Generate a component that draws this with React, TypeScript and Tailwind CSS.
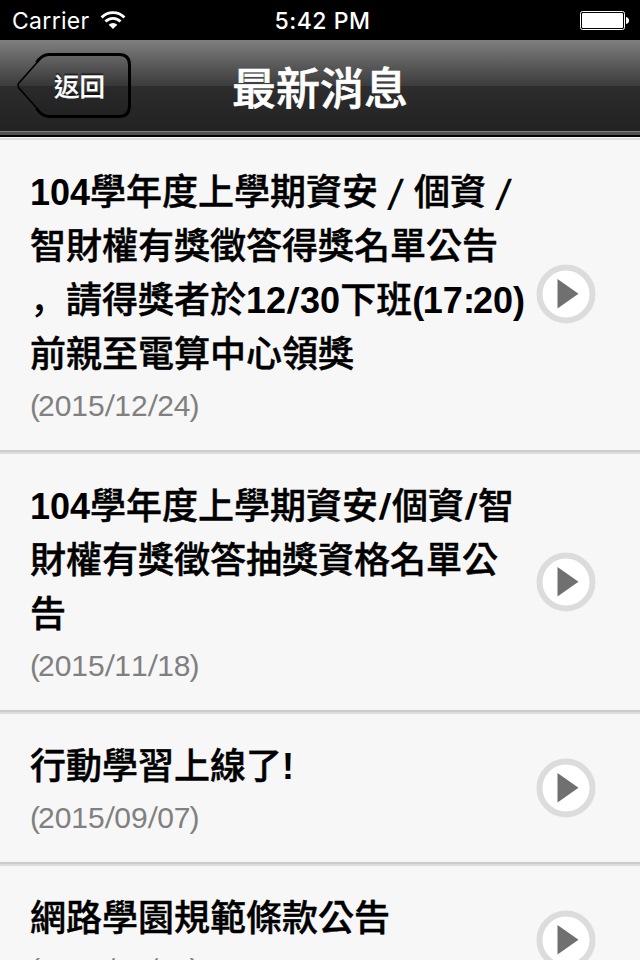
import clsx from "clsx";

interface NewsItem {
  lines: string[];
  date: string;
}

const NEWS: NewsItem[] = [
  {
    lines: ["104學年度上學期資安 / 個資 /", "智財權有獎徵答得獎名單公告", "，請得獎者於12/30下班(17:20)", "前親至電算中心領獎"],
    date: "2015/12/24",
  },
  {
    lines: ["104學年度上學期資安/個資/智", "財權有獎徵答抽獎資格名單公", "告"],
    date: "2015/11/18",
  },
  { lines: ["行動學習上線了!"], date: "2015/09/07" },
  { lines: ["網路學園規範條款公告"], date: "2013/05/07" },
];

const CJK = "font-['Noto_Sans_CJK_TC',sans-serif] font-medium";
const LATIN = "font-['Liberation_Sans',sans-serif] font-bold";

// Splits a title into runs and gives each its own face; punctuation is spaced like Helvetica Neue
function MixedText({ text }: { text: string }) {
  const runs = text.match(/ \/ ?|\d+|[/():!]|，|[^\x20-\x7e，]+/g) ?? [];
  return (
    <>
      {runs.map((run, i) => {
        let cls = clsx(CJK, "[-webkit-text-stroke:0.45px_#000]");
        if (run.startsWith(" /")) {
          return (
            <span key={i} className={clsx(CJK, "inline-block w-9 text-center text-[31px] [-webkit-text-stroke:1px_#000]")}>
              <span className="inline-block -translate-y-px -skew-x-[8deg]">/</span>
            </span>
          );
        }
        if (run === "，") cls = "font-['Noto_Sans_CJK_SC',sans-serif] font-medium";
        else if (run === "/") cls = clsx(LATIN, "inline-block w-[14px] -skew-x-[7deg] text-center");
        else if (run === ":") cls = clsx(LATIN, "tracking-[-2px]");
        else if (run === "(" || run === ")") cls = clsx(LATIN, "tracking-[-1.3px]");
        else if (/^[\d!]/.test(run)) cls = LATIN;
        return <span key={i} className={cls}>{run}</span>;
      })}
    </>
  );
}

function DateText({ date }: { date: string }) {
  const parts = date.split("/");
  return (
    <p className="h-[50px] font-['Liberation_Sans',sans-serif] text-[30px] leading-[50px] text-[#808080] [font-kerning:none]">
      <span className="tracking-[-2px]">(</span>
      {parts.map((part, i) => (
        <span key={i}>
          {i > 0 && <span className="inline-block w-[9.5px] -skew-x-[5deg] text-center">/</span>}
          {part}
        </span>
      ))}
      <span className="-ml-px">)</span>
    </p>
  );
}

function StatusBar() {
  return (
    <div className="grid h-10 grid-cols-3 items-center bg-black pl-3 pr-[11px] font-['Inter',sans-serif] text-white">
      <div className="flex items-center">
        <span className="mt-px text-[23px] leading-10 tracking-[0.3px]">Carrier</span>
        <svg className="-mt-px ml-[10px]" width="26" height="20" viewBox="0 0 26 20" fill="none" stroke="#fff">
          <path d="M1.6 7.4a16.1 16.1 0 0 1 22.8 0" strokeWidth="2.9" />
          <path d="M5.5 11.5a10.6 10.6 0 0 1 15 0" strokeWidth="2.9" />
          <path d="M13 19l-4.300-4.300a6 6 0 0 1 8.600 0z" fill="#fff" stroke="none" />
        </svg>
      </div>
      <span className="mt-px pl-1 text-center text-[23px] font-medium leading-10 tracking-[0.5px]">5:42 PM</span>
      <svg className="justify-self-end" width="49" height="19" viewBox="0 0 49 19">
        <rect x="0.5" y="0.5" width="44" height="18" rx="2" fill="none" stroke="#fff" />
        <rect x="2" y="2" width="41" height="15" rx="1" fill="#fff" />
        <path d="M46 6q3 0.500 3 3.500t-3 3.500z" fill="#fff" />
      </svg>
    </div>
  );
}

function BackButton() {
  return (
    <div className="absolute left-4 top-3 h-[68px] w-[118px]">
      <svg className="absolute inset-0" width="118" height="68" viewBox="0 0 118 68">
        <defs>
          <linearGradient id="back" x1="0" y1="0" x2="0" y2="1">
            <stop offset="0" stopColor="#686868" />
            <stop offset="0.51" stopColor="#363636" />
            <stop offset="0.51" stopColor="#2a2a2a" />
            <stop offset="1" stopColor="#222222" />
          </linearGradient>
        </defs>
        <path
          d="M21.500 9.500Q26 2.500 32 2.500H103Q113.500 2.500 113.500 13V53.500Q113.500 64.500 103 64.500H32Q26 64.500 21.500 57.500L2.500 35.500Q1.300 33.500 2.500 31.500Z"
          fill="url(#back)"
        />
        <path d="M22 9.500L2.500 31.500Q1.300 33.500 2.500 35.500L22 57.500" fill="none" stroke="#000" strokeWidth="1.6" />
        <path
          d="M20.500 10.500Q26 2.500 33 2.500H103Q113.500 2.500 113.500 13V53.500Q113.500 64.500 103 64.500H33Q26 64.500 20.500 56.500"
          fill="none"
          stroke="#000"
          strokeWidth="3"
        />
      </svg>
      <span className="absolute left-[38px] top-4 font-['Noto_Sans_CJK_TC',sans-serif] text-[25.5px] font-medium leading-[34px] text-white [-webkit-text-stroke:0.25px_#fff] [text-shadow:0_-2px_1px_rgba(0,0,0,0.6)]">
        返回
      </span>
    </div>
  );
}

function NavBar() {
  return (
    <header className="relative h-[97px]">
      <div className="h-[46px] bg-linear-to-b from-[#7f7f7f] to-[#3c3c3c]" />
      <div className="h-[45px] bg-linear-to-b from-[#2d2d2d] to-[#222222]" />
      <div className="h-px bg-[#7b7b7b]" />
      <div className="h-[3px] bg-[#515151]" />
      <div className="h-0.5 bg-black" />
      <BackButton />
      <h1 className="absolute inset-x-0 top-0 h-[96px] text-center font-['Noto_Sans_CJK_TC',sans-serif] text-[44px] font-medium leading-[92px] text-white [-webkit-text-stroke:0.6px_#fff]">
        最新消息
      </h1>
    </header>
  );
}

function PlayButton() {
  return (
    <svg className="shrink-0" width="60" height="60" viewBox="0 0 60 60">
      <circle cx="30" cy="30" r="26.500" fill="#fff" stroke="#dcdcdc" strokeWidth="6" />
      <path d="M21.500 15L42.500 29.700L21.500 44.500Z" fill="#707070" />
    </svg>
  );
}

function NewsRow({ item }: { item: NewsItem }) {
  return (
    <li className="group flex shrink-0 flex-col">
      <div className="flex items-center justify-between pl-[30px] pr-11">
        <div className="pb-[19px] pt-[22px]">
          <h2 className="mb-[3px] whitespace-nowrap text-[36px] leading-[54px] text-black">
            {item.lines.map((line, i) => (
              <span key={i} className="block h-[54px]"><MixedText text={line} /></span>
            ))}
          </h2>
          <DateText date={item.date} />
        </div>
        <div className="-ml-6 group-first:-mt-0.5"><PlayButton /></div>
      </div>
      <div className="h-0.5 bg-[#cccccc]" />
      <div className="h-0.5 bg-[#dddddd]" />
    </li>
  );
}

export default function App() {
  return (
    <div className="flex h-[960px] w-[640px] flex-col overflow-hidden bg-[#f7f7f7]">
      <StatusBar />
      <NavBar />
      <div className="h-px shrink-0 bg-[#f7f7f7]" />
      <div className="h-0.5 shrink-0 bg-[#dddddd]" />
      <ul className="flex min-h-0 flex-1 flex-col overflow-hidden">
        {NEWS.map((item) => (
          <NewsRow key={item.date} item={item} />
        ))}
      </ul>
    </div>
  );
}
